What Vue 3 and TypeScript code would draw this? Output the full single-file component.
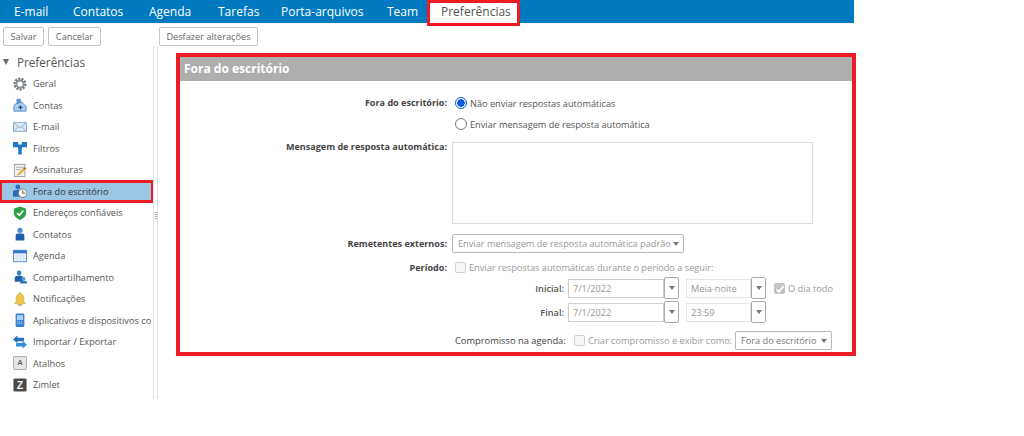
<script setup lang="ts">
const tabs: { label: string; width: number }[] = [
  { label: 'E-mail', width: 59 },
  { label: 'Contatos', width: 76 },
  { label: 'Agenda', width: 69 },
  { label: 'Tarefas', width: 63 },
  { label: 'Porta-arquivos', width: 106 },
  { label: 'Team', width: 40 }
]
const items: { id: string; label: string; active?: boolean }[] = [
  { id: 'gear', label: 'Geral' },
  { id: 'accounts', label: 'Contas' },
  { id: 'mail', label: 'E-mail' },
  { id: 'filter', label: 'Filtros' },
  { id: 'sign', label: 'Assinaturas' },
  { id: 'ooo', label: 'Fora do escritório', active: true },
  { id: 'shield', label: 'Endereços confiáveis' },
  { id: 'person', label: 'Contatos' },
  { id: 'calendar', label: 'Agenda' },
  { id: 'share', label: 'Compartilhamento' },
  { id: 'bell', label: 'Notificações' },
  { id: 'phone', label: 'Aplicativos e dispositivos co' },
  { id: 'swap', label: 'Importar / Exportar' },
  { id: 'keyA', label: 'Atalhos' },
  { id: 'keyZ', label: 'Zimlet' }
]
</script>

<template>
  <div class="page">
    <nav class="tabs">
      <a v-for="t in tabs" :key="t.label" class="tab" :style="{ width: t.width + 'px' }">{{ t.label }}</a>
      <a class="tab current">Preferências</a>
    </nav>

    <div class="toolbar">
      <div class="tool-left">
        <button class="btn b-save">Salvar</button>
        <button class="btn b-cancel">Cancelar</button>
      </div>
      <button class="btn b-undo">Desfazer alterações</button>
    </div>

    <div class="main">
      <aside class="side">
        <div class="side-head"><span class="caret"></span>Preferências</div>
        <ul class="tree">
          <li v-for="it in items" :key="it.id" class="node" :class="{ active: it.active }">
            <svg class="ico" viewBox="0 0 16 16" width="14" height="14">
              <template v-if="it.id === 'gear'">
                <circle cx="8" cy="8" r="5.6" fill="none" stroke="#70767c" stroke-width="3.6" stroke-dasharray="2.2 1.2" />
                <circle cx="8" cy="8" r="4" fill="none" stroke="#8b9197" stroke-width="2" />
              </template>
              <template v-else-if="it.id === 'accounts'">
                <circle cx="6.5" cy="3.5" r="2.8" fill="#5b9bd8" />
                <path d="M1 15 V9 Q2 6 6 6 L10 4.5 L15 10 V15 Z" fill="#a9cdec" stroke="#2f6bb0" stroke-width=".8" />
                <path d="M8.5 8.5 V13 M6.2 10.8 H10.8" stroke="#16437e" stroke-width="1.4" />
              </template>
              <template v-else-if="it.id === 'mail'">
                <rect x=".5" y="3" width="15" height="10" fill="#dbe8f5" stroke="#8aa7c4" />
                <path d="M1 3.5 L8 9 L15 3.5 M1 12.5 L6 7.5 M15 12.5 L10 7.5" fill="none" stroke="#8aa7c4" />
              </template>
              <template v-else-if="it.id === 'filter'">
                <path d="M0 1 H6 V4 H10 V1 H16 V7 H10.5 L10 9 V15.5 H6 V9 L5.5 7 H0 Z" fill="#1f78c8" />
              </template>
              <template v-else-if="it.id === 'sign'">
                <rect x="1.5" y="1.5" width="12" height="14" fill="#eef1f5" stroke="#8d97a3" />
                <path d="M3.5 5 H11 M3.5 7.5 H9" stroke="#a9b2bc" />
                <path d="M5 12.5 L12 5 L14.5 7 L8 13.5 L4.5 14.5 Z" fill="#e6b93c" />
                <path d="M12 5 L14.5 7" stroke="#d0475a" stroke-width="1.6" />
              </template>
              <template v-else-if="it.id === 'ooo'">
                <circle cx="5.5" cy="3.5" r="2.8" fill="#2a6cb8" />
                <path d="M0 14.5 V9 Q0 6.8 3 6.8 H8 Q10 6.8 10 9 V14.5 Z" fill="#2a6cb8" />
                <circle cx="11" cy="10.5" r="5" fill="#f4f4f0" stroke="#6d7378" />
                <path d="M11 7.2 V10.5 H14" fill="none" stroke="#444" stroke-width=".9" />
              </template>
              <template v-else-if="it.id === 'shield'">
                <path d="M8 .5 L15 3 V8 Q15 13 8 16 Q1 13 1 8 V3 Z" fill="#2ea043" />
                <path d="M4.6 8 L7.2 10.6 L11.8 5.2" fill="none" stroke="#fff" stroke-width="1.8" />
              </template>
              <template v-else-if="it.id === 'person'">
                <circle cx="8" cy="3.8" r="3" fill="#4a8dd6" />
                <path d="M3 15.5 V10 Q3 7.5 6 7.5 H10 Q13 7.5 13 10 V15.5 Z" fill="#1f5fa8" />
              </template>
              <template v-else-if="it.id === 'calendar'">
                <rect x=".5" y="1.5" width="15" height="13" fill="#f2f6fb" stroke="#4c85c0" />
                <rect x=".5" y="1.5" width="15" height="3.5" fill="#2f78c8" />
                <path d="M1 8 H15 M1 11 H15 M5 5 V14 M8.5 5 V14 M12 5 V14" stroke="#c5d5e6" stroke-width=".7" />
              </template>
              <template v-else-if="it.id === 'share'">
                <circle cx="7" cy="3.5" r="2.8" fill="#3c7fcb" />
                <path d="M2 13.5 V9 Q2 6.5 5 6.5 H9 Q11.5 6.5 11.5 9 V13.5 Z" fill="#1f5fa8" />
                <circle cx="12" cy="10" r="2.2" fill="#5b9bd8" />
                <path d="M8 15.5 V14 Q8 12.5 10 12.5 H14 Q16 12.5 16 14 V15.5 Z" fill="#2f78c8" />
              </template>
              <template v-else-if="it.id === 'bell'">
                <path d="M8 .5 Q9.3 .5 9.3 2.2 Q12.5 3.5 12.5 7.5 V11 L14.5 13.5 H1.5 L3.5 11 V7.5 Q3.5 3.5 6.7 2.2 Q6.7 .5 8 .5 Z" fill="#eec44a" stroke="#c29a2a" stroke-width=".5" />
                <path d="M6 14 H10 V15.5 H6 Z" fill="#a88428" />
              </template>
              <template v-else-if="it.id === 'phone'">
                <rect x="3" y=".5" width="10" height="15.5" rx="1.2" fill="#3c82cf" />
                <rect x="4.5" y="2.5" width="7" height="5.5" fill="#a9d2f2" />
                <path d="M4.5 10 H11.5 M4.5 12 H11.5" stroke="#a9d2f2" stroke-dasharray="1.5 .8" />
              </template>
              <template v-else-if="it.id === 'swap'">
                <path d="M0 5 L5 .5 V3 H12.5 V7 H5 V9 Z" fill="#1f6ec0" />
                <path d="M16 11 L11 6.5 V9 H3.5 V13 H11 V15.5 Z" fill="#2f8fe0" />
              </template>
              <template v-else-if="it.id === 'keyA'">
                <rect x=".5" y=".5" width="15" height="15" rx="1.5" fill="#e6e6e6" stroke="#9b9b9b" />
                <text x="8" y="10" text-anchor="middle" class="key dark">A</text>
              </template>
              <template v-else>
                <rect x=".5" y=".5" width="15" height="15" rx="1.5" fill="#4a4a4a" />
                <text x="8" y="12" text-anchor="middle" class="key light">Z</text>
              </template>
            </svg>
            <span class="node-label">{{ it.label }}</span>
          </li>
        </ul>
      </aside>

      <div class="sash"><i></i><i></i><i></i><i></i></div>

      <section class="panel">
        <h1 class="panel-title">Fora do escritório</h1>
        <div class="form">
          <div class="row r-radio">
            <label class="lab">Fora do escritório:</label>
            <div class="stack">
              <div class="opt"><span class="radio on"></span>Não enviar respostas automáticas</div>
              <div class="opt"><span class="radio"></span>Enviar mensagem de resposta automática</div>
            </div>
          </div>

          <div class="row r-msg">
            <label class="lab">Mensagem de resposta automática:</label>
            <div class="textarea"></div>
          </div>

          <div class="row r-ext">
            <label class="lab">Remetentes externos:</label>
            <div class="select wide">Enviar mensagem de resposta automática padrão<span class="arrow"></span></div>
          </div>

          <div class="row r-per">
            <label class="lab">Período:</label>
            <div class="off"><span class="check"></span>Enviar respostas automáticas durante o período a seguir:</div>
          </div>

          <div class="dates">
            <div class="date-row">
              <span class="sub">Inicial:</span>
              <div class="input date">7/1/2022</div><div class="drop"><span class="arrow"></span></div>
              <div class="input time">Meia-noite</div><div class="drop"><span class="arrow"></span></div>
              <div class="off allday"><span class="check checked"><svg viewBox="0 0 12 12" width="12" height="12"><path d="M2.5 6.5 L5 9 L9.5 3" fill="none" stroke="#fff" stroke-width="1.8" /></svg></span>O dia todo</div>
            </div>
            <div class="date-row">
              <span class="sub">Final:</span>
              <div class="input date">7/1/2022</div><div class="drop"><span class="arrow"></span></div>
              <div class="input time">23:59</div><div class="drop"><span class="arrow"></span></div>
            </div>
          </div>

          <div class="appt">
            <span class="appt-label">Compromisso na agenda:</span>
            <div class="off"><span class="check"></span>Criar compromisso e exibir como:</div>
            <div class="select show">Fora do escritório<span class="arrow"></span></div>
          </div>
        </div>
      </section>
    </div>
  </div>
</template>

<style>
html, body { margin: 0; background: #fff; overflow: hidden; }
</style>

<style scoped>
.page { width: 1024px; height: 436px; font-family: "Open Sans", "Liberation Sans", sans-serif; font-size: 9.2px; color: #333; background: #fff; overflow: hidden; }

.tabs { width: 854px; height: 23px; background: #0079c1; display: flex; box-sizing: border-box; padding-left: 14px; align-items: center; }
.tab { color: #fff; font-size: 12px; line-height: 23px; white-space: nowrap; flex: none; }
.tab.current { background: #fff; color: #555; box-sizing: border-box; height: 26px; line-height: 18px; width: 93px; padding-left: 11px; border: 3px solid #ed1c24; align-self: flex-start; }

.toolbar { display: flex; padding: 4px 0 0 3px; box-sizing: border-box; height: 23px; }
.tool-left { display: flex; gap: 4px; width: 156px; }
.btn { height: 19px; padding: 0; background: #fff; border: 1px solid #c4c4c4; border-radius: 2px; font: inherit; color: #666; line-height: 16px; white-space: nowrap; }
.b-save { width: 41px; }
.b-cancel { width: 53px; }
.b-undo { width: 99px; }

.main { display: flex; height: 354px; }
.side { width: 153px; flex: none; overflow: hidden; }
.side-head { display: flex; align-items: center; height: 20px; margin-top: 6px; font-size: 11.7px; color: #555; padding-left: 3px; }
.caret { width: 0; height: 0; border-left: 3.5px solid transparent; border-right: 3.5px solid transparent; border-top: 6px solid #666; margin-right: 8px; }
.tree { list-style: none; margin: 1px 0 0; padding: 0; }
.node { display: flex; align-items: center; height: 21.5px; padding-left: 13px; box-sizing: border-box; white-space: nowrap; color: #555; }
.node.active { background: #9ac7e6; outline: 3px solid #ed1c24; outline-offset: -2px; color: #333; }
.ico { flex: none; margin-right: 6px; }
.key { font: 700 9px "Liberation Sans", sans-serif; }
.key.dark { fill: #666; }
.key.light { fill: #fff; font-size: 12px; }

.sash { width: 5px; margin-right: 18px; flex: none; height: 353px; box-sizing: border-box; border-left: 1px solid #e2e2e2; border-right: 1px solid #e2e2e2; display: flex; flex-direction: column; align-items: center; justify-content: center; gap: 1px; padding-bottom: 14px; }
.sash i { width: 2px; height: 1px; background: #aaa; }

.panel { width: 680px; height: 303px; margin-top: 7px; box-sizing: border-box; border: 4px solid #ed1c24; background: #fff; }
.panel-title { margin: 0; height: 24px; line-height: 24px; background: #aeaeae; color: #fff; font-size: 12px; font-weight: 700; padding-left: 4px; }

.form { display: flex; flex-direction: column; }
.row { display: flex; }
.lab { width: 268px; flex: none; text-align: right; font-size: 9.05px; font-weight: 700; color: #444; padding-right: 1px; box-sizing: border-box; white-space: nowrap; }
.r-radio { margin-top: 15px; }
.r-radio .lab { line-height: 13px; margin-right: 7px; }
.stack { display: flex; flex-direction: column; gap: 7px; }
.opt { display: flex; align-items: center; height: 14px; color: #555; }
.radio { width: 10px; height: 10px; border-radius: 50%; border: 1px solid #777; margin-right: 3px; background: #fff; flex: none; }
.radio.on { border-color: #0a5ee0; background: radial-gradient(circle, #0a5ee0 0 3.5px, #fff 4px); }

.r-msg { margin-top: 11px; }
.r-msg .lab { line-height: 9px; }
.textarea { width: 361px; height: 82px; border: 1px solid #dcdcdc; box-sizing: border-box; margin-left: 4px; background: #fff; }

.r-ext { margin-top: 10px; align-items: center; }
.select { display: flex; align-items: center; justify-content: space-between; height: 19px; box-sizing: border-box; border: 1px solid #b9b9b9; border-radius: 2px; padding: 0 4px 0 5px; color: #999; white-space: nowrap; }
.select.wide { width: 232px; margin-left: 4px; }
.select.show { width: 97px; margin-left: auto; color: #777; }
.arrow { display: block; width: 0; height: 0; border-left: 3.5px solid transparent; border-right: 3.5px solid transparent; border-top: 4px solid #777; flex: none; }

.r-per { margin-top: 7px; align-items: center; height: 14px; }
.r-per .lab { margin-right: 7px; }
.off { display: flex; align-items: center; color: #999; white-space: nowrap; }
.check { width: 11px; height: 11px; box-sizing: border-box; border: 1px solid #d0d0d0; border-radius: 2px; margin-right: 3px; background: #f6f6f6; display: block; flex: none; }
.check.checked { background: #c4c4c4; border-color: #c4c4c4; }
.check svg { display: block; margin: -1px; }

.dates { margin-top: 4px; display: flex; flex-direction: column; gap: 4px; }
.date-row { display: flex; align-items: center; height: 20px; padding-left: 345px; color: #555; }
.sub { width: 39px; text-align: right; font-weight: 600; color: #555; margin-right: 4px; }
.input { height: 19px; box-sizing: border-box; border: 1px solid #d8d8d8; line-height: 17px; padding-left: 4px; color: #999; white-space: nowrap; }
.date { width: 96px; border-color: #cfcfcf; }
.time { width: 65px; margin-left: 7px; border-color: #e4e4e4; }
.drop { width: 15px; height: 22px; box-sizing: border-box; border: 1px solid #a9a9a9; border-radius: 2px; display: flex; align-items: center; justify-content: center; background: #fff; }
.allday { margin-left: 8px; }

.appt { display: flex; align-items: center; margin-top: 9px; width: 652px; height: 19px; padding-left: 275px; box-sizing: border-box; white-space: nowrap; }
.appt-label { color: #444; width: 109px; margin-right: 10px; flex: none; font-size: 9.3px; }
</style>
